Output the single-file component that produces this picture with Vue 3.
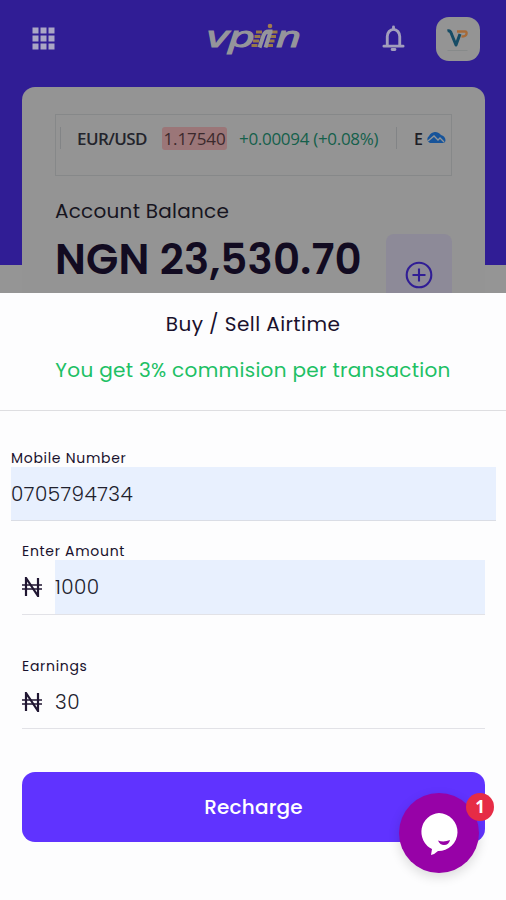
<script setup>
import { ref } from 'vue'

const mobile = ref('0705794734')
const amount = ref('1000')
const earnings = ref('30')
</script>

<template>
  <main class="screen">
    <section class="backdrop">
      <header class="topbar">
        <svg class="grid-icon" viewBox="0 0 24 24">
          <template v-for="r in 3" :key="r">
            <rect v-for="c in 3" :key="c" :x="c * 8 - 7.5" :y="r * 8 - 7.5" width="6" height="6" />
          </template>
        </svg>
        <svg class="logo" viewBox="0 0 96 36">
          <g class="word">
            <text x="1" y="26" textLength="48" lengthAdjust="spacingAndGlyphs">vp</text>
            <text x="70" y="26" textLength="25" lengthAdjust="spacingAndGlyphs">n</text>
          </g>
          <g fill="none">
            <path stroke="#98794a" stroke-width="2.800" d="M50 11h6M48.500 15.500h6M47 20h6M45.500 24.500h6M65.500 11h6M64 15.500h6M62.500 20h6M61 24.500h6" />
            <path stroke="#95959b" stroke-width="4" d="M53.500 26.500l4-12q1.500-4 5-4h4M64 12l-4.500 14.500" />
          </g>
          <circle cx="64" cy="5" r="2.300" fill="#a17b4e" />
        </svg>
        <div class="actions">
          <svg class="bell" viewBox="0 0 24 28">
            <path d="M5.500 21.500V12a6.500 7.500 0 0 1 13 0v9.500M2 22h20" />
            <path d="M12 2v2M10.500 25.500h3" />
          </svg>
          <div class="avatar">
            <svg viewBox="0 0 44 44">
              <path d="M11.500 14q3-1 4 3l4.500 11 4-11" stroke="#164c65" stroke-width="3" />
              <path d="M21 14.500h8q2 0 1.500 2.500t-5 2.500" stroke="#a66a38" stroke-width="2.400" />
              <path d="M11.500 33.500h20" stroke="#878a8a" stroke-width="1" />
            </svg>
          </div>
        </div>
      </header>

      <div class="card">
        <div class="ticker">
          <i class="sep"></i>
          <b class="pair">EUR/USD</b>
          <span class="price">1.17540</span>
          <span class="change">+0.00094 (+0.08%)</span>
          <i class="sep second"></i>
          <b class="next">E</b>
          <svg class="cloud" viewBox="0 0 20 14">
            <path d="M4 13a4 4 0 0 1-1-7 7 7 0 0 1 12-1q4 1 4.500 5 0 3-3 3z" fill="#17549a" />
            <path d="M2 11l6-5 4 4 2-2 4 4" fill="none" stroke="#929598" stroke-width="1.300" />
          </svg>
        </div>
        <div class="balance">
          <div>
            <p class="balance-label">Account Balance</p>
            <p class="balance-value">NGN 23,530.70</p>
          </div>
          <button class="add" aria-label="Add">
            <svg viewBox="0 0 28 28"><circle cx="14" cy="14" r="12.300" /><path d="M14 7.500v13M7.500 14h13" /></svg>
          </button>
        </div>
      </div>
    </section>

    <section class="sheet">
      <div class="heading">
        <h1>Buy / Sell Airtime</h1>
        <p>You get 3% commision per transaction</p>
      </div>
      <form class="form" @submit.prevent>
        <label class="field mobile">
          <span class="label">Mobile Number</span>
          <input v-model="mobile" class="filled" />
        </label>
        <label class="field amount">
          <span class="label">Enter Amount</span>
          <span class="row">
            <svg class="naira" viewBox="0 0 20 20"><path d="M4 19V1l12 18V1" /><path class="bars" d="M0 8h20M0 12h20" /></svg>
            <input v-model="amount" class="filled" />
          </span>
        </label>
        <label class="field earnings">
          <span class="label">Earnings</span>
          <span class="row">
            <svg class="naira" viewBox="0 0 20 20"><path d="M4 19V1l12 18V1" /><path class="bars" d="M0 8h20M0 12h20" /></svg>
            <input v-model="earnings" readonly />
          </span>
        </label>
        <button class="recharge">Recharge</button>
      </form>
    </section>

    <div class="chat">
      <svg viewBox="0 0 80 80">
        <path d="M40 20a19 19 0 1 1-1 38q-3 3-7 4l1-6A19 19 0 0 1 40 20z" fill="#fff" />
        <path d="M39 47.500q6 2 12-.500-1 5-6 5-4 0-6-4.500z" fill="#9702a7" />
      </svg>
      <span class="badge">1</span>
    </div>
  </main>
</template>

<style>
body { margin: 0; }
</style>

<style scoped>
* { box-sizing: border-box; }
p, h1 { margin: 0; font-weight: 400; }
.screen {
  position: relative;
  width: 506px;
  height: 900px;
  overflow: hidden;
  background: #fdfdfe;
  font-family: Poppins, Inter, sans-serif;
  color: #19112d;
}
.backdrop {
  height: 293px;
  overflow: hidden;
  background: linear-gradient(#301d95 265px, #959595 265px);
}
.topbar {
  height: 87px;
  padding: 0 26px 10px 32px;
  display: grid;
  grid-template-columns: 174px 96px 1fr;
  align-items: center;
}
.grid-icon { width: 24px; height: 24px; fill: #aaa6c5; }
.logo { width: 96px; height: 36px; overflow: visible; }
.word text {
  font: italic 500 30px "Open Sans", sans-serif;
  fill: #95959b;
  stroke: #95959b;
  stroke-width: 1.1;
}
.actions { display: flex; justify-content: flex-end; align-items: center; gap: 31px; }
.bell { width: 23px; height: 27px; fill: none; stroke: #a29ebc; stroke-width: 3; stroke-linecap: round; }
.avatar { width: 44px; height: 44px; border-radius: 13px; background: #949494; }
.avatar svg { display: block; fill: none; stroke-linejoin: round; }
.card {
  width: 463px;
  height: 230px;
  margin-left: 22px;
  padding: 27px 33px 0;
  border-radius: 13px 13px 0 0;
  background: #949494;
}
.ticker {
  height: 62px;
  padding: 12px 5px 0 4px;
  display: flex;
  align-items: flex-start;
  border: 1px solid #868889;
  font: 17px/24px "Open Sans", sans-serif;
  white-space: nowrap;
}
.sep { width: 1px; height: 22px; background: #828486; flex: none; }
.pair { width: 71px; margin-left: 16px; font-weight: 600; color: #23242c; letter-spacing: -.6px; }
.price {
  width: 65px;
  height: 23px;
  margin-left: 14px;
  border-radius: 3px;
  background: #9b7678;
  color: #3b292c;
  text-align: center;
  letter-spacing: -.1px;
}
.change { width: 142px; margin-left: 12px; color: #14604b; letter-spacing: -.3px; }
.second { margin-left: 15px; }
.next { width: 10px; margin-left: 17px; color: #1f2026; font-size: 16px; font-weight: 600; }
.cloud { width: 20px; height: 14px; margin: 3px 0 0 2px; flex: none; }
.balance { display: flex; justify-content: space-between; }
.balance-label { margin-top: 22px; font-size: 20px; line-height: 26px; letter-spacing: .25px; color: #17151f; white-space: nowrap; }
.balance-value { margin-top: 11px; font-size: 42px; line-height: 50px; font-weight: 600; letter-spacing: .2px; color: #120b21; white-space: nowrap; }
.add {
  width: 66px;
  height: 84px;
  margin-top: 58px;
  padding: 0;
  border: 0;
  border-radius: 8px;
  background: #8d8a98;
  flex: none;
}
.add svg { width: 28px; height: 28px; fill: none; stroke: #301d95; stroke-width: 2.1; }
.sheet { height: 607px; }
.heading { height: 118px; padding-top: 17px; border-bottom: 1px solid #dedee1; text-align: center; white-space: nowrap; }
.heading h1 { font-size: 20px; line-height: 28px; letter-spacing: .42px; }
.heading p { margin-top: 18px; font-size: 20px; line-height: 28px; letter-spacing: .3px; color: #20c064; }
.form { display: flex; flex-direction: column; }
.field { display: flex; flex-direction: column; margin: 0 21px 0 22px; }
.mobile { margin: 38px 10px 0 11px; }
.amount { margin-top: 21px; }
.earnings { margin-top: 42px; }
.label { height: 18px; font-size: 14px; line-height: 18px; letter-spacing: .7px; white-space: nowrap; }
.field input {
  width: 100%;
  min-width: 0;
  height: 54px;
  padding: 0;
  border: 0;
  border-bottom: 1px solid #dadde5;
  border-radius: 0;
  outline: 0;
  background: transparent;
  font: 300 20px Poppins, Inter, sans-serif;
  letter-spacing: .45px;
  color: #20202c;
}
.field input.filled { background: #e8f0fe; }
.amount .row, .earnings .row { display: flex; align-items: center; border-bottom: 1px solid #e2e2e7; }
.row input { height: 53px; border: 0; flex: 1; }
.naira { width: 20px; height: 20px; margin-right: 13px; flex: none; fill: none; stroke: #201632; stroke-width: 2.2; }
.naira .bars { stroke-width: 1.6; }
.earnings .row { height: 54px; }
.amount .row { height: 55px; }
.amount .row input { height: 54px; }
.recharge {
  height: 70px;
  margin: 43px 21px 0 22px;
  border: 0;
  border-radius: 13px;
  background: #6033ff;
  color: #fff;
  font: 500 20px Poppins, Inter, sans-serif;
  letter-spacing: .2px;
}
.chat {
  position: absolute;
  left: 399px;
  top: 793px;
  width: 80px;
  height: 80px;
  border-radius: 50%;
  background: #9702a7;
  box-shadow: 0 4px 12px rgba(0, 0, 0, .14);
}
.chat svg { display: block; }
.badge {
  position: absolute;
  left: 67px;
  top: 0;
  width: 28px;
  height: 28px;
  border-radius: 50%;
  background: #e62c46;
  color: #fff;
  font: 700 17px/28px "Open Sans", sans-serif;
  text-align: center;
}
</style>
